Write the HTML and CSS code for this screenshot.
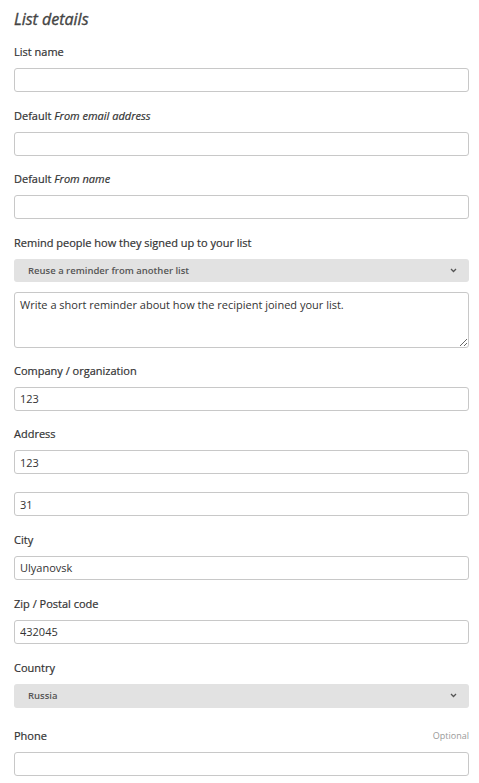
FILE: index.html
```html
<!DOCTYPE html>
<html>
<head>
<meta charset="utf-8">
<link rel="stylesheet" href="styles.css">
</head>
<body>
<div class="page">
  <h2 class="title">List details</h2>
  <div class="field">
    <label class="label">List name</label>
    <input class="input" type="text">
  </div>
  <div class="field">
    <label class="label">Default <em>From email address</em></label>
    <input class="input" type="text">
  </div>
  <div class="field">
    <label class="label">Default <em>From name</em></label>
    <input class="input" type="text">
  </div>
  <div class="field remind">
    <label class="label">Remind people how they signed up to your list</label>
    <div class="select"><span>Reuse a reminder from another list</span><svg class="chev" width="7" height="5" viewBox="0 0 7 5"><path d="M1 1 L3.5 3.5 L6 1" fill="none" stroke="#555" stroke-width="1.3"/></svg></div>
    <textarea class="textarea">Write a short reminder about how the recipient joined your list.</textarea>
  </div>
  <div class="field">
    <label class="label">Company / organization</label>
    <input class="input" type="text" value="123">
  </div>
  <div class="field">
    <label class="label">Address</label>
    <input class="input" type="text" value="123">
    <input class="input second" type="text" value="31">
  </div>
  <div class="field wide">
    <label class="label">City</label>
    <input class="input" type="text" value="Ulyanovsk">
  </div>
  <div class="field wide">
    <label class="label">Zip / Postal code</label>
    <input class="input" type="text" value="432045">
  </div>
  <div class="field country">
    <label class="label">Country</label>
    <div class="select"><span>Russia</span><svg class="chev" width="7" height="5" viewBox="0 0 7 5"><path d="M1 1 L3.5 3.5 L6 1" fill="none" stroke="#555" stroke-width="1.3"/></svg></div>
  </div>
  <div class="field phone">
    <div class="label-row"><label class="label">Phone</label><span class="optional">Optional</span></div>
    <input class="input" type="text">
  </div>
</div>
</body>
</html>
```
FILE: styles.css
```css
* { box-sizing: border-box; }
html, body { margin: 0; padding: 0; background: #fff; }
body { font-family: "Open Sans", "DejaVu Sans", sans-serif; color: #444; }
.page { padding: 8px 10px 0 14px; display: flex; flex-direction: column; }
.title { margin: 0 0 14px; font-size: 16px; line-height: 22px; font-style: italic; font-weight: 400; color: #444; -webkit-text-stroke: 0.35px #444; }
.field { display: flex; flex-direction: column; margin-bottom: 15.5px; }
.field.remind { margin-bottom: 15px; }
.field.wide { margin-bottom: 16px; }
.label { display: block; font-size: 11px; line-height: 16px; font-weight: 400; color: #333; margin-bottom: 8px; -webkit-text-stroke: 0.2px #333; }
.label em { font-style: italic; }
.label-row { display: flex; justify-content: space-between; align-items: flex-start; }
.optional { font-size: 9px; line-height: 16px; color: #999; }
.input { display: block; width: 100%; height: 24px; border: 1px solid #c8c8c8; border-radius: 3px; padding: 0 5px; font-family: "Open Sans", sans-serif; font-size: 11px; color: #333; background: #fff; margin: 0; outline: none; }
.input.second { margin-top: 18px; }
.select { height: 23px; background: #e2e2e2; border-radius: 3px; display: flex; align-items: center; justify-content: space-between; padding: 0 12px 0 14px; font-size: 9.5px; font-weight: 600; color: #555; }
.country .select { height: 24px; }
.chev { display: block; }
.textarea { display: block; width: 100%; height: 56px; margin-top: 10px; border: 1px solid #c8c8c8; border-radius: 3px; padding: 4px 5px; font-family: "Open Sans", sans-serif; font-size: 11px; line-height: 16px; color: #333; resize: vertical; outline: none; }
.field.country { margin-bottom: 20.5px; }
```
